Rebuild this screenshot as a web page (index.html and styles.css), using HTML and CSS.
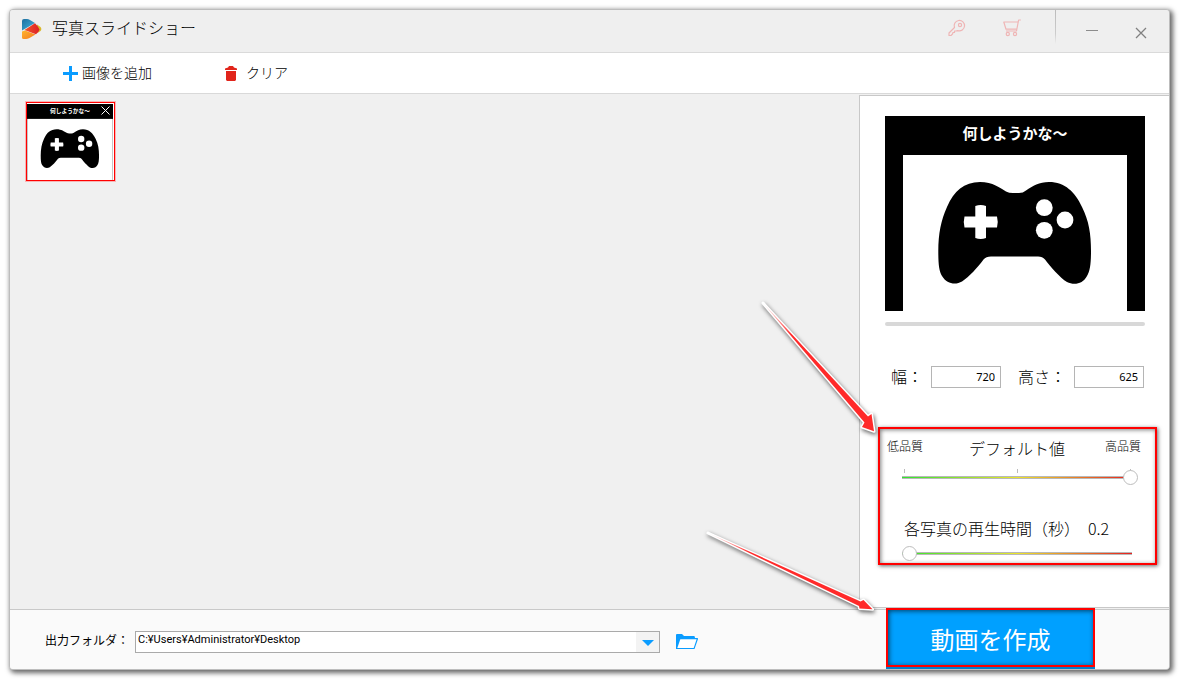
FILE: index.html
```
<!DOCTYPE html>
<html lang="ja">
<head>
<meta charset="utf-8">
<title>写真スライドショー</title>
<link rel="stylesheet" href="styles.css">
</head>
<body>
<svg class="defs" aria-hidden="true">
  <defs>
    <symbol id="slide" viewBox="0 0 260 199">
      <rect width="260" height="199" fill="#000"/>
      <rect x="18" y="39" width="224" height="160" fill="#fff"/>
      <text class="slide-text" x="130" y="23" text-anchor="middle">何しようかな～</text>
      <path fill="#000" d="M95 66C108 66 115 72 121 75.500Q124 77 128 77H134Q138 77 141 74.500C148 70 154 66 164 66C180 66 190 76 197 91C204 105 206 118 206 135C206 148 205 155 202 160C198 168 189 169.500 182 166C175 162 165 150 160 143.500Q157.500 140.500 153 140.500H106Q101 140.500 98.500 143.500C93 151 84 161 77 165.500C71 169 62 168.500 57 160C54 155 53.300 148 53.300 135C53.300 118 56 104 62 91C69 75 79 66 95 66Z"/>
      <path fill="#fff" d="M90.300 90Q95.700 88 101 90V100.500H112Q113.500 106 112 111.500H101V122Q95.700 124 90.300 122V111.500H79.500Q78 106 79.500 100.500H90.300Z"/>
      <circle cx="159.300" cy="91.700" r="8.400" fill="#fff"/>
      <circle cx="180" cy="104" r="8.400" fill="#fff"/>
      <circle cx="159.300" cy="114.300" r="8.400" fill="#fff"/>
    </symbol>
  </defs>
</svg>

<div class="window">
  <header class="titlebar">
    <svg class="logo" viewBox="0 0 20 20" aria-hidden="true">
      <defs>
        <linearGradient id="lb" x1="0" y1="0" x2="1" y2="1"><stop offset="0" stop-color="#1f6f9f"/><stop offset="1" stop-color="#3fb6e0"/></linearGradient>
        <linearGradient id="lo" x1="0" y1="0" x2="1" y2="1"><stop offset="0" stop-color="#ffb52e"/><stop offset="1" stop-color="#f47a20"/></linearGradient>
        <linearGradient id="lr" x1="0" y1="0" x2="1" y2="0"><stop offset="0" stop-color="#f0562a"/><stop offset="1" stop-color="#dd1f26"/></linearGradient>
      </defs>
      <path fill="#d9b82a" d="M15 5.500 18.500 8Q20.200 10 18.500 12L15.500 14Z"/>
      <path fill="url(#lb)" d="M0 2Q0 0 2 0H5Q6.500 0 8 1L13 4 0 11.500Z"/>
      <path fill="url(#lo)" d="M0 12.500 3 11.500 13.500 15.500 7 19.300Q5.500 20 4 20H1.500Q0 20 0 18.500Z"/>
      <path fill="url(#lr)" d="M2.500 11 13 4.300Q16 7 17.500 10.500 16.500 13.500 14 15.200Z"/>
    </svg>
    <h1 class="title">写真スライドショー</h1>
    <button class="icon-btn key" type="button" aria-label="登録">
      <svg width="18" height="18" viewBox="0 0 18 18" fill="none" stroke="#efb5b5" stroke-width="1.200" stroke-linejoin="round"><path d="M6.500 8.500A5.200 5.200 0 1 1 9.800 11.600L8 12H6.500V13.500H5L4.500 15 3 16.500H1V14Z"/><circle cx="12" cy="6" r="1.600"/></svg>
    </button>
    <button class="icon-btn cart" type="button" aria-label="購入">
      <svg width="18" height="18" viewBox="0 0 18 18" fill="none" stroke="#efb5b5" stroke-width="1.200" stroke-linejoin="round"><path d="M17.800 1H15.600L13.500 12H3M15 4.500"/><path d="M15.200 3H.8L3 10.200H13.800"/><circle cx="4.800" cy="15" r="1.600"/><circle cx="12" cy="15" r="1.600"/></svg>
    </button>
    <span class="divider"></span>
    <button class="icon-btn minimize" type="button" aria-label="最小化">
      <svg width="12" height="12" viewBox="0 0 12 12" stroke="#8c8c8c"><path d="M0 6.500H12"/></svg>
    </button>
    <button class="icon-btn close" type="button" aria-label="閉じる">
      <svg width="12" height="12" viewBox="0 0 12 12" stroke="#808080" stroke-width="1.300"><path d="M1 1 11 11M11 1 1 11"/></svg>
    </button>
  </header>

  <nav class="toolbar">
    <button class="tool" type="button">
      <svg width="15" height="15" viewBox="0 0 15 15" fill="#0a9cff" aria-hidden="true"><path d="M6 0H9V6H15V9H9V15H6V9H0V6H6Z"/></svg>
      <span class="tool-text">画像を追加</span>
    </button>
    <button class="tool clear" type="button">
      <svg width="12" height="15" viewBox="0 0 12 15" fill="#e1251b" aria-hidden="true"><path d="M0 4V2.500L3 1.500 4 0H8L9 1.500 12 2.500V4ZM1 5H11V14L10 15H2L1 14Z"/></svg>
      <span class="tool-text">クリア</span>
    </button>
  </nav>

  <main class="workspace">
    <section class="gallery" aria-label="画像一覧">
      <figure class="thumb">
        <svg class="thumb-image" viewBox="18 0 224 199" role="img" aria-label="何しようかな～"><use href="#slide" width="260" height="199"/></svg>
        <button class="remove" type="button" aria-label="削除">
          <svg width="9" height="9" viewBox="0 0 9 9" stroke="#fff"><path d="M.5.5 8.500 8.500M8.500.5.5 8.500"/></svg>
        </button>
      </figure>
    </section>

    <aside class="panel">
      <svg class="preview" viewBox="0 0 260 195" role="img" aria-label="プレビュー"><use href="#slide" width="260" height="199"/></svg>
      <div class="progress"></div>

      <div class="size-row">
        <label for="w">幅：</label>
        <input class="size" id="w" type="text" value="720">
        <label class="second" for="h">高さ：</label>
        <input class="size" id="h" type="text" value="625">
      </div>

      <section class="settings">
        <div class="quality-labels">
          <span class="small">低品質</span>
          <label class="default" for="quality">デフォルト値</label>
          <span class="small">高品質</span>
        </div>
        <div class="scale ticks"><input class="range" id="quality" type="range" min="0" max="100" value="100"></div>
        <label class="time-label" for="time">各写真の再生時間（秒）<span class="seconds">0.2</span></label>
        <div class="scale"><input class="range" id="time" type="range" min="0" max="100" value="0"></div>
        <svg class="arrow arrow-settings" width="124" height="142" viewBox="0 0 124 142" aria-hidden="true">
          <defs><linearGradient id="a1" gradientUnits="userSpaceOnUse" x1="2" y1="3" x2="30" y2="36"><stop offset="0" stop-color="#fff"/><stop offset="1" stop-color="#ff2a2a"/></linearGradient></defs>
          <path fill="url(#a1)" d="M2 3 107 116.500 110.500 114 113 131.300 101 127 103.500 122.500Z"/>
        </svg>
      </section>
    </aside>
  </main>

  <footer class="footer">
    <label class="folder-label" for="folder">出力フォルダ：</label>
    <div class="combo">
      <select id="folder"><option>C:¥Users¥Administrator¥Desktop</option></select>
      <span class="combo-arrow"></span>
    </div>
    <button class="icon-btn browse" type="button" aria-label="フォルダを開く">
      <svg width="22" height="16" viewBox="0 0 22 16"><path fill="#0a9cff" d="M0 15V1Q0 0 1 0H6L8 2H18Q19 2 19 4H21.500Q22 4 22 5L18.500 15Z"/><path fill="#fff" d="M4.300 5.200H20.600L17.700 14H1.300Z"/></svg>
    </button>
    <div class="create-wrap">
      <button class="create" type="button">動画を作成</button>
      <svg class="arrow arrow-create" width="182" height="92" viewBox="0 0 182 92" aria-hidden="true">
        <defs><linearGradient id="a2" gradientUnits="userSpaceOnUse" x1="3" y1="3" x2="45" y2="22"><stop offset="0" stop-color="#fff"/><stop offset="1" stop-color="#ff2a2a"/></linearGradient></defs>
        <path fill="url(#a2)" d="M3 3 155.500 71.500 158.500 70 167.500 79.300 154.500 78.500 154 76Z"/>
      </svg>
    </div>
  </footer>
</div>
</body>
</html>
```

FILE: styles.css
```
* { box-sizing: border-box; }

body {
  margin: 0;
  padding: 9px 10px 10px 9px;
  background: #fff;
  color: #000;
  font: 300 16px/24px "Noto Sans CJK JP", sans-serif;
}

button, input, select { font: inherit; color: inherit; }
button { padding: 0; border: 0; background: none; }
svg { display: block; flex: none; }
.defs { position: absolute; width: 0; height: 0; }

.window {
  display: flex;
  flex-direction: column;
  min-height: calc(100vh - 19px);
  border: 1px solid #bdbdbd;
  border-radius: 4px;
  background: #f0f0f0;
  box-shadow: 2px 2px 5px 1px rgba(0, 0, 0, .6);
}

.titlebar {
  display: flex;
  align-items: center;
  height: 43px;
  padding: 0 22px 5px 12px;
  border-bottom: 1px solid #dadada;
  background: #efefef;
  border-radius: 3px 3px 0 0;
}
.logo { width: 20px; height: 20px; }
.title { flex: 1; margin: 0 0 4px 10px; font-size: 16px; font-weight: 300; }
.key, .cart { margin-bottom: 2px; }
.cart { margin-left: 37px; }
.divider {
  align-self: flex-start;
  width: 1px;
  height: 34px;
  margin: 0 30px 0 34px;
  background: linear-gradient(#bbb, #ccc 70%, #efefef);
}
.minimize { margin-top: 3px; }
.close { margin: 8px 0 0 37px; }

.toolbar {
  display: flex;
  align-items: center;
  height: 41px;
  padding: 0 53px;
  border-bottom: 1px solid #d9d9d9;
  background: #fff;
}
.tool { display: flex; align-items: center; gap: 4px; font-size: 14px; line-height: 20px; }
.tool-text { padding-bottom: 3px; }
.clear { margin-left: 73px; gap: 9px; }

.workspace {
  flex: 1;
  display: grid;
  grid-template-columns: minmax(0, 1fr) 310px;
}
.gallery { padding: 8px 16px; }
.thumb {
  position: relative;
  width: 89px;
  height: 79px;
  margin: 0;
  padding-top: 1px;
  border: 1px solid #f00;
  background: #fff;
  box-shadow: 0 0 0 1px #f7b5b5;
}
.thumb-image { width: 86px; height: 76px; }
.remove { position: absolute; top: 3px; right: 4px; }
.slide-text { font: 700 15px "Noto Sans CJK JP", sans-serif; fill: #fff; }

.panel {
  margin: 1px 0;
  padding: 20px 12px 20px 18px;
  border: solid #c8c8c8;
  border-width: 1px 0 1px 1px;
  background: #fff;
}
.preview { width: 260px; height: 195px; margin-left: 7px; }
.progress { height: 4px; margin: 11px 12px 0 7px; border-radius: 2px; background: #d8d8d8; }
.size-row { display: flex; align-items: center; margin: 38px 0 0 13px; }
.size-row label { padding-bottom: 2px; }
.size-row .second { margin-left: 17px; }
.size {
  width: 70px;
  height: 22px;
  margin-left: 8px;
  padding: 0 5px 2px;
  border: 1px solid #b5b5b5;
  background: #fff;
  font: 400 11px/16px "Noto Sans", sans-serif;
  text-align: right;
}

.settings {
  position: relative;
  margin-top: 37px;
  padding: 7px 14px 2px 7px;
  border: 2px solid #f00;
  box-shadow: 1px 1px 4px rgba(0, 0, 0, .6), inset 1px 1px 4px rgba(0, 0, 0, .5);
}
.quality-labels { display: flex; justify-content: space-between; }
.small { font-size: 12px; line-height: 20px; }
.default { padding-left: 6px; }
.scale { margin: 6px 3px 0 15px; }
.ticks {
  margin-top: 9px;
  padding-top: 1px;
  background:
    linear-gradient(#bbb, #bbb) 2px 0 / 1px 4px no-repeat,
    linear-gradient(#bbb, #bbb) 49% 0 / 1px 4px no-repeat,
    linear-gradient(#bbb, #bbb) calc(100% - 7px) 0 / 1px 4px no-repeat;
}
.range {
  appearance: none;
  display: block;
  width: 100%;
  height: 15px;
  margin: 0;
  background:
    linear-gradient(90deg, #2fe52f, #ece52a 50%, #e82020) 0 7px / calc(100% - 6px) 1px no-repeat,
    linear-gradient(#b8b8b8, #b8b8b8) 0 6px / calc(100% - 6px) 3px no-repeat;
}
.range::-webkit-slider-thumb {
  appearance: none;
  width: 15px;
  height: 15px;
  border: 1px solid #bdbdbd;
  border-radius: 50%;
  background: #fff;
}
.time-label { display: block; margin: 31px 0 0 17px; white-space: nowrap; }
.seconds { margin-left: 8px; }

.footer {
  display: flex;
  align-items: center;
  height: 60px;
  padding: 0 74px 0 35px;
  border-top: 1px solid #c9c9c9;
  border-radius: 0 0 3px 3px;
  background: #fafafa;
}
.folder-label { width: 90px; font-size: 12px; font-weight: 400; }
.combo { position: relative; flex: 0 1 525px; height: 22px; margin-top: 4px; }
.combo select {
  appearance: none;
  display: block;
  width: 100%;
  height: 100%;
  padding: 0 26px 3px 2px;
  border: 1px solid #aaa;
  border-radius: 0;
  background: #fff;
  font: 400 11px/16px Roboto, sans-serif;
}
.combo-arrow {
  position: absolute;
  inset: 1px 1px 1px auto;
  width: 23px;
  background: #f3f3f3;
  pointer-events: none;
}
.combo-arrow::after {
  content: "";
  position: absolute;
  left: 6px;
  top: 8px;
  border: solid transparent;
  border-width: 6px 6px 0;
  border-top-color: #0a9cff;
}
.browse { margin: 5px 0 0 16px; }
.create-wrap { position: relative; align-self: flex-start; margin: -2px 0 0 auto; }
.create {
  display: block;
  width: 209px;
  height: 59px;
  padding-top: 3px;
  border: 2px solid #f00;
  background: #00a0ff;
  box-shadow: 0 2px 0 #007fcc, inset 1px 1px 5px rgba(0, 0, 0, .6);
  color: #fff;
  font-size: 24px;
  font-weight: 400;
}

.arrow {
  position: absolute;
  overflow: visible;
  stroke: #fff;
  stroke-width: 3px;
  stroke-linejoin: round;
  paint-order: stroke;
  filter: drop-shadow(1px 2px 2px rgba(0, 0, 0, .6));
  pointer-events: none;
}
.arrow-settings { left: -119px; top: -129px; }
.arrow-create { left: -181px; top: -78px; }
```
